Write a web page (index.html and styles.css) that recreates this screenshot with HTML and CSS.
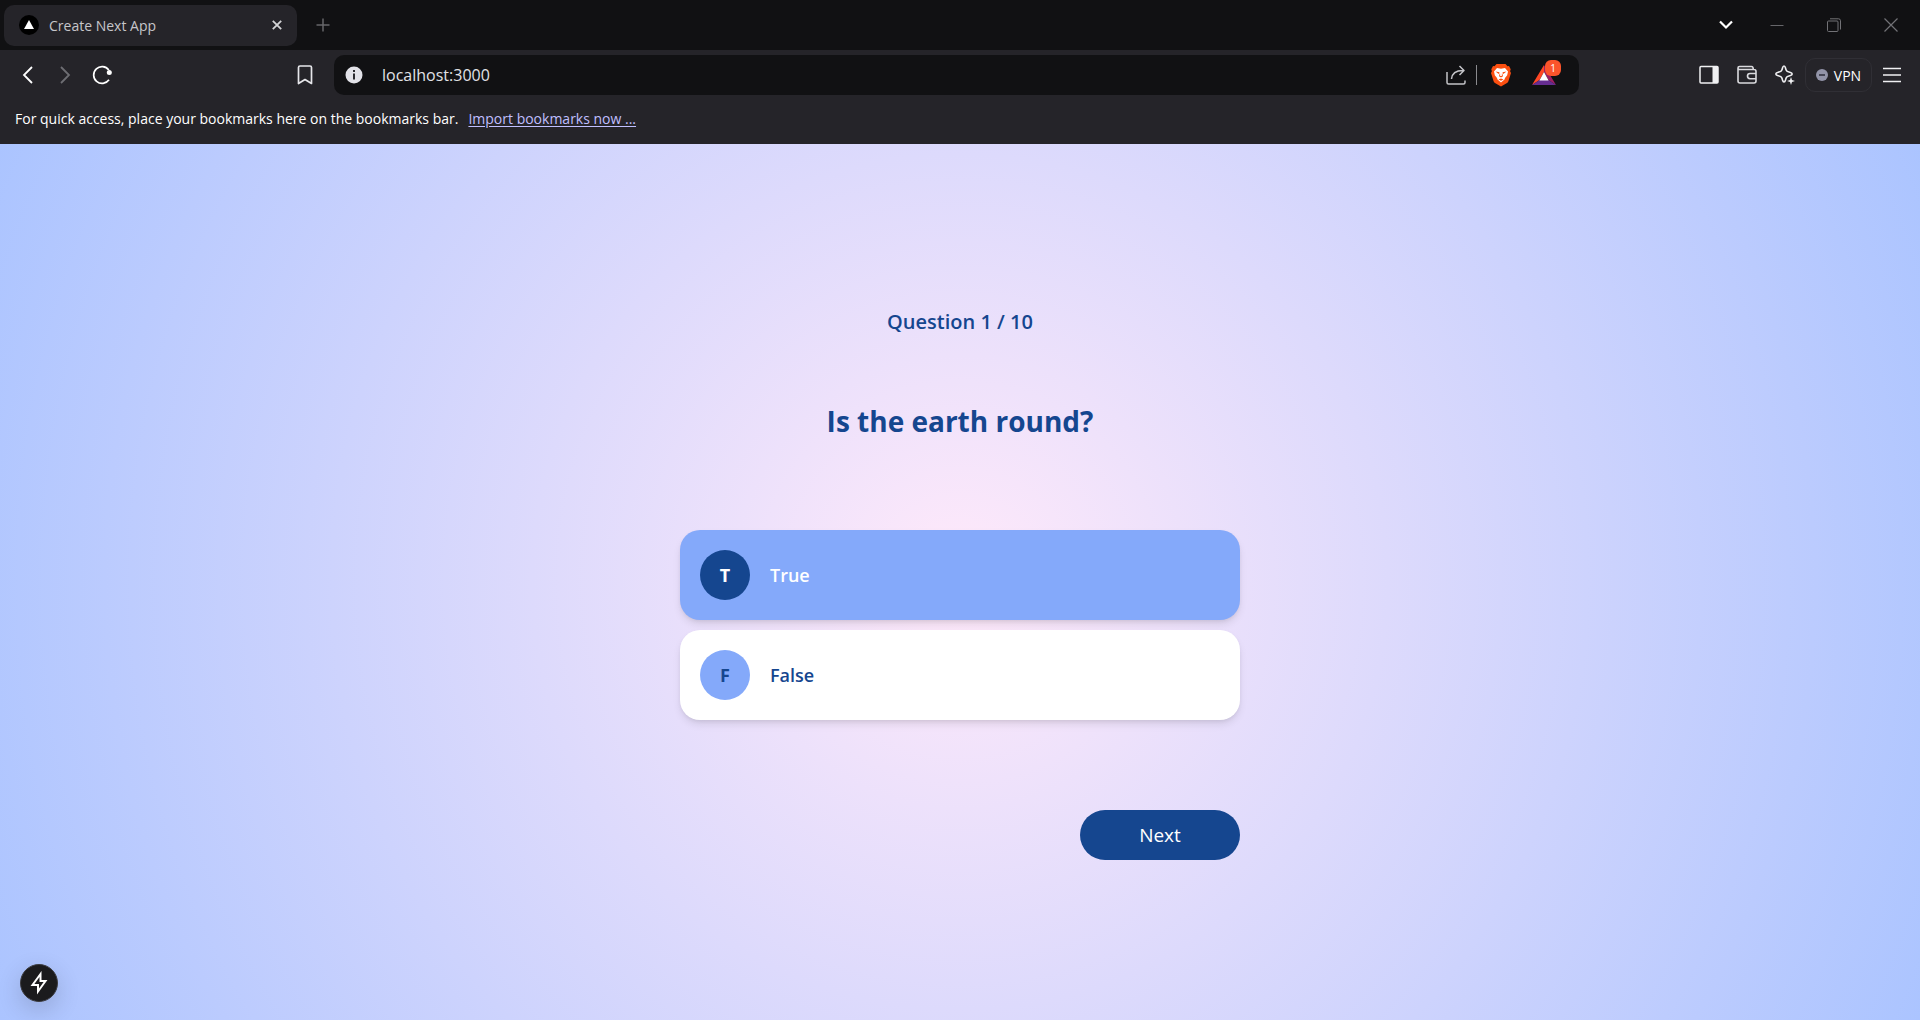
FILE: index.html
```html
<!DOCTYPE html>
<html lang="en">
<head>
<meta charset="utf-8">
<title>Create Next App</title>
<link rel="stylesheet" href="styles.css">
</head>
<body>
<header class="browser">
  <div class="tabstrip">
    <div class="tab">
      <svg class="favicon" viewBox="0 0 20 20"><circle cx="10" cy="10" r="10" fill="#000"/><path d="M10 5l5 9H5z" fill="#fff"/></svg>
      <span class="tab-title">Create Next App</span>
      <button class="icon-button" aria-label="Close tab"><svg width="10" height="10" viewBox="0 0 10 10"><path d="M.8.8l8.400 8.400M9.200.8L.8 9.200" stroke="#d4d4d6" stroke-width="1.800"/></svg></button>
    </div>
    <button class="icon-button new-tab" aria-label="New tab"><svg width="14" height="14" viewBox="0 0 14 14"><path d="M7 .5v13M.5 7h13" stroke="#66666a" stroke-width="1.500"/></svg></button>
    <div class="window-controls">
      <button class="icon-button" aria-label="Search tabs"><svg width="14" height="10" viewBox="0 0 14 10"><path d="M1 1.500l6 6 6-6" fill="none" stroke="#fff" stroke-width="2.200"/></svg></button>
      <button class="icon-button" aria-label="Minimize"><svg width="14" height="14" viewBox="0 0 14 14"><path d="M.5 7.500h13" stroke="#66666a"/></svg></button>
      <button class="icon-button" aria-label="Restore"><svg width="14" height="14" viewBox="0 0 14 14" fill="none" stroke="#727276"><rect x=".5" y="3" width="10.500" height="10.500" rx="1"/><path d="M3 .8h8.500q2 0 2 2v8.700"/></svg></button>
      <button class="icon-button" aria-label="Close"><svg width="14" height="14" viewBox="0 0 14 14"><path d="M.5.5l13 13M13.500.5l-13 13" stroke="#727276" stroke-width="1.200"/></svg></button>
    </div>
  </div>
  <div class="toolbar">
    <div class="nav">
      <button class="icon-button" aria-label="Back"><svg width="20" height="20" viewBox="0 0 20 20"><path d="M14 2L6 10l8 8" fill="none" stroke="#fff" stroke-width="1.800"/></svg></button>
      <button class="icon-button" aria-label="Forward"><svg width="20" height="20" viewBox="0 0 20 20"><path d="M6 2l8 8-8 8" fill="none" stroke="#6e6e73" stroke-width="1.800"/></svg></button>
      <button class="icon-button" aria-label="Reload"><svg width="20" height="20" viewBox="0 0 20 20"><path d="M17 14.800A8.400 8.400 0 1 1 16.800 5" fill="none" stroke="#fff" stroke-width="1.700"/><circle cx="17.300" cy="7.600" r="2.500" fill="#fff"/></svg></button>
    </div>
    <button class="icon-button bookmark" aria-label="Bookmark this page"><svg width="20" height="20" viewBox="0 0 20 20"><path d="M3.500 2.500q0-1.500 1.500-1.500h10q1.500 0 1.500 1.500V18.500L10 14.500l-6.500 4z" fill="none" stroke="#e6e6ea" stroke-width="1.700" stroke-linejoin="round"/></svg></button>
    <div class="address">
      <svg width="18" height="18" viewBox="0 0 18 18"><circle cx="9" cy="9" r="8.500" fill="#e2e2e8"/><path d="M9 4v2M9 7.500V13.500" stroke="#2a2a2e" stroke-width="2"/></svg>
      <input class="url" type="text" value="localhost:3000" aria-label="Address">
      <button class="icon-button" aria-label="Share"><svg width="20" height="20" viewBox="0 0 20 20" fill="none" stroke="#c4c4c8" stroke-width="1.500" stroke-linejoin="round"><path d="M1 7v10.500q0 1.500 1.500 1.500h15q1.500 0 1.500-1.500V15.500"/><path d="M5.500 14C6 8 9.500 5.500 17 5.500M13.500 1l4.500 4.500-4.500 4.500"/></svg></button>
      <span class="divider"></span>
      <button class="icon-button shield" aria-label="Brave Shields"><svg width="20" height="23" viewBox="0 0 20 23"><path d="M5.500 0h9l2 2.200 1.500-.2 1.700 3.200-.6 2L20 9l-2.600 8.200q-.5 1.300-1.800 2.100L10 22.500l-5.600-3.200q-1.300-.8-1.800-2.100L0 9l.9-1.800-.6-2L2 2l1.500.2z" fill="#fb4f10"/><path d="M6 4l4 .8 4-.8 3 3.500-.8 3.700-2.200 2.800-.5 1.500L10 18.500l-3.500-3-.5-1.500-2.200-2.800L3 7.500z" fill="#fff"/><path d="M4.500 7.500l4 .8-.8 1.700zM15.500 7.500l-4 .8.800 1.700zM8 12.200l2 1.300 2-1.300-1-3.700-.2 3.500h-1.600L9 8.500zM7.500 15.500l2.500-1 2.500 1-2.500 1.200z" fill="#fb4f10"/></svg></button>
      <button class="icon-button rewards" aria-label="Brave Rewards"><svg width="24" height="20" viewBox="0 0 24 20"><path d="M12 0v7L7.500 15 0 20z" fill="#ff4724"/><path d="M12 0l12 20-7.500-5L12 7z" fill="#9e1f63"/><path d="M0 20l7.500-5h9l7.500 5z" fill="#662d91"/><path d="M12 7l4.600 8.500H7.400z" fill="#fff"/></svg><span class="badge">1</span></button>
    </div>
    <div class="tools">
      <button class="icon-button" aria-label="Sidebar"><svg width="20" height="20" viewBox="0 0 20 20"><rect x="1" y="1.500" width="18" height="16.500" rx="1" fill="none" stroke="#f0f0f2" stroke-width="1.500"/><path d="M13.500 1.500H19V18h-5.500z" fill="#f0f0f2"/></svg></button>
      <button class="icon-button" aria-label="Wallet"><svg width="20" height="20" viewBox="0 0 20 20" fill="none" stroke="#dadade" stroke-width="1.600" stroke-linejoin="round"><path d="M1 3v13q0 2 2 2h14q2 0 2-2V6.500q0-2-2-2H2.500Q1 4.500 1 3t1.500-1.500h12q1.800 0 1.800 3"/><path d="M19 8.500h-6q-2.500 0-2.500 2.600t2.500 2.600h6"/></svg></button>
      <button class="icon-button" aria-label="Leo AI"><svg width="20" height="20" viewBox="0 0 20 20"><path d="M9 1q1 0 1.500 2c.7 3 1.200 3.500 4.300 4.300 3.200.8 3.200 2.600 0 3.400-3.100.8-3.600 1.300-4.300 4.300-.7 2.700-2.300 2.700-3 0-.7-3-1.200-3.500-4.300-4.300-3.200-.8-3.200-2.600 0-3.400C6.300 6.500 6.800 6 7.500 3Q8 1 9 1z" fill="none" stroke="#f0f0f2" stroke-width="1.600"/><path d="M16 12l1 3 3 1-3 1-1 3-1-3-3-1 3-1z" fill="#f0f0f2"/></svg></button>
      <button class="vpn"><svg width="12" height="12" viewBox="0 0 12 12"><circle cx="6" cy="6" r="6" fill="#9294a8"/><path d="M3 6h6" stroke="#333340" stroke-width="1.600"/></svg>VPN</button>
      <button class="icon-button" aria-label="Menu"><svg width="20" height="20" viewBox="0 0 20 20"><path d="M1 3.500h18M1 10h18M1 16.500h18" stroke="#f0f0f2" stroke-width="1.500"/></svg></button>
    </div>
  </div>
  <div class="bookmarks">
    <span>For quick access, place your bookmarks here on the bookmarks bar.</span>
    <a href="#">Import bookmarks now ...</a>
  </div>
</header>
<main class="page">
  <form class="quiz">
    <p class="progress">Question 1 / 10</p>
    <h1 class="question">Is the earth round?</h1>
    <div class="answers">
      <button type="button" class="answer selected" aria-pressed="true"><span class="letter">T</span><span>True</span></button>
      <button type="button" class="answer" aria-pressed="false"><span class="letter">F</span><span>False</span></button>
    </div>
    <button type="button" class="next">Next</button>
  </form>
  <button class="dev-indicator" aria-label="Next.js status"><svg width="20" height="24" viewBox="0 0 20 24"><path d="M11.500 3L3.500 14H9v6.500L16.500 10h-5z" fill="none" stroke="#fff" stroke-width="2"/></svg></button>
</main>
</body>
</html>
```
FILE: styles.css
```css
* { box-sizing: border-box; }

body {
  margin: 0;
  min-height: 100vh;
  display: flex;
  flex-direction: column;
  font-family: "Open Sans", "Noto Sans", sans-serif;
}

button, input { font: inherit; color: inherit; }

.browser { background: #252429; color: #fff; }

.icon-button {
  display: flex;
  align-items: center;
  justify-content: center;
  width: 20px;
  height: 24px;
  padding: 0;
  border: 0;
  background: none;
  flex: none;
}

.tabstrip {
  display: flex;
  align-items: center;
  height: 50px;
  padding: 0 19px 0 4px;
  background: #111113;
}

.tab {
  display: flex;
  align-items: center;
  gap: 10px;
  width: 293px;
  height: 41px;
  padding: 0 10px 0 15px;
  border-radius: 10px;
  background: #252429;
  font-size: 14px;
  color: #c6c6ca;
}

.favicon { width: 20px; height: 20px; }
.tab-title { flex: 1; }
.new-tab { margin-left: 16px; }
.window-controls { display: flex; gap: 37px; margin-left: auto; }
.window-controls .icon-button:first-child { margin-right: -6px; }

.toolbar {
  display: flex;
  align-items: center;
  height: 50px;
  padding: 0 18px;
}

.nav { display: flex; gap: 17px; }
.bookmark { margin: 0 19px 0 auto; }

.address {
  display: flex;
  align-items: center;
  flex: 0 1 1245px;
  height: 40px;
  margin-right: 120px;
  padding: 0 20px 0 11px;
  border-radius: 10px;
  background: #111113;
}

.url {
  flex: 1;
  min-width: 0;
  margin-left: 19px;
  padding: 0;
  border: 0;
  background: none;
  font-size: 16px;
  color: #e2e2e6;
}

.divider { width: 1px; height: 20px; margin: 0 14px 0 10px; background: #8a8a8e; }
.shield { margin-right: 20px; }
.rewards { position: relative; width: 28px; padding-right: 2px; }

.badge {
  position: absolute;
  top: -3px;
  right: -2px;
  width: 16px;
  height: 16px;
  border-radius: 6px;
  background: #fb542b;
  font-size: 10px;
  line-height: 16px;
}

.tools { display: flex; align-items: center; gap: 18px; }

.vpn {
  display: flex;
  align-items: center;
  justify-content: center;
  gap: 6px;
  width: 67px;
  height: 34px;
  margin: 0 -8px;
  padding: 0;
  border: 1px solid #302f35;
  border-radius: 10px;
  background: none;
  font-size: 14px;
}

.bookmarks {
  display: flex;
  gap: 10px;
  height: 44px;
  padding: 9px 15px;
  font-size: 14px;
  line-height: 20px;
}

.bookmarks a { color: #c0bfff; text-underline-offset: 2px; }

.page {
  position: relative;
  flex: 1;
  display: flex;
  align-items: center;
  justify-content: center;
  background: radial-gradient(circle, #ffe9fa 0%, #abc4ff 100%);
  color: #15468f;
}

.quiz {
  display: flex;
  flex-direction: column;
  width: 560px;
  max-width: 100%;
}

.progress {
  margin: 0 0 61px;
  text-align: center;
  font-size: 20px;
  font-weight: 600;
  line-height: 36px;
}

.question {
  margin: 0 0 89px;
  text-align: center;
  font-size: 28px;
  font-weight: 700;
  line-height: 40px;
}

.answers { display: grid; gap: 10px; margin-bottom: 90px; }

.answer {
  display: flex;
  align-items: center;
  gap: 20px;
  height: 90px;
  padding: 0 20px;
  border: 0;
  border-radius: 20px;
  background: #fff;
  box-shadow: 0 5px 8px -1px rgb(0 0 0 / 10%), 0 2px 5px -2px rgb(0 0 0 / 10%);
  font-size: 18px;
  font-weight: 600;
}

.letter {
  display: grid;
  place-items: center;
  width: 50px;
  height: 50px;
  border-radius: 50%;
  background: #84a9fa;
  font-weight: 700;
}

.selected { background: #84a9fa; color: #fff; }
.selected .letter { background: #15468f; }

.next {
  align-self: flex-end;
  width: 160px;
  height: 50px;
  border: 0;
  border-radius: 25px;
  background: #15468f;
  color: #fff;
  font-size: 19px;
  font-weight: 500;
}

.dev-indicator {
  position: absolute;
  left: 20px;
  bottom: 18px;
  display: grid;
  place-items: center;
  width: 38px;
  height: 38px;
  padding: 0;
  border: 1px solid #3c3c40;
  border-radius: 50%;
  background: #1b1b1d;
  box-shadow: 0 8px 24px rgb(0 0 0 / 16%);
}
```
